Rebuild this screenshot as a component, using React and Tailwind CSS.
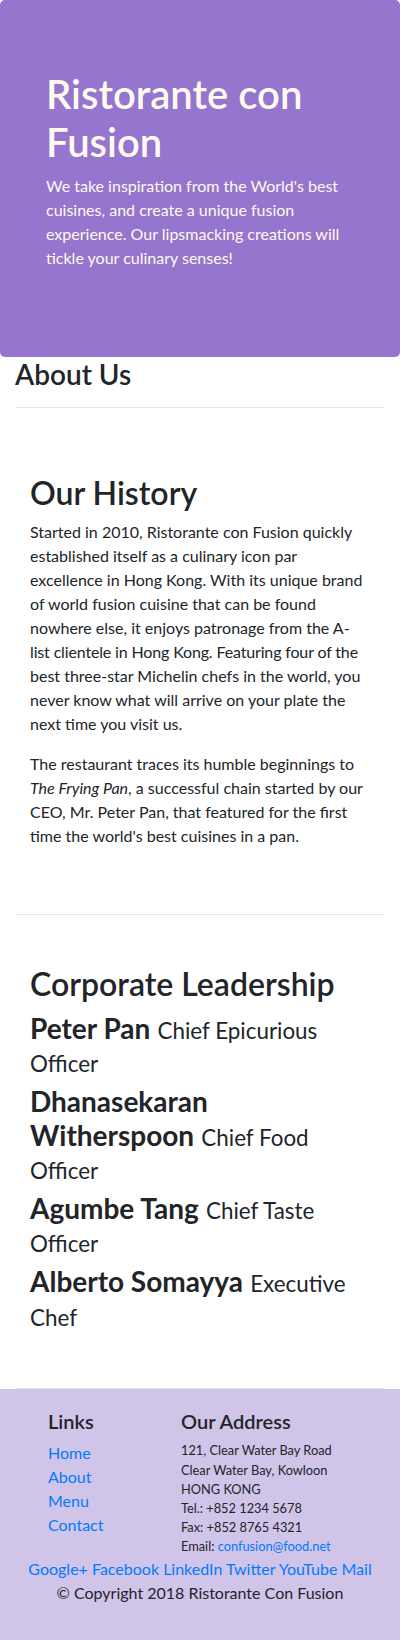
import React from "react";

const leaders = [
  { name: "Peter Pan", title: "Chief Epicurious Officer" },
  { name: "Dhanasekaran Witherspoon", title: "Chief Food Officer" },
  { name: "Agumbe Tang", title: "Chief Taste Officer" },
  { name: "Alberto Somayya", title: "Executive Chef" },
];

const links = ["Home", "About", "Menu", "Contact"];
const socials = ["Google+", "Facebook", "LinkedIn", "Twitter", "YouTube", "Mail"];

export default function App() {
  return (
    <div className="font-['Lato',sans-serif] text-[#212529] bg-white">
      {/* Jumbotron */}
      <header className="bg-[#9575cd] text-[#fffaf0] rounded-[5px] px-[46px] pt-[70px] pb-[71px]">
        <h1 className="text-[40px] leading-[48px] font-semibold mb-2">
          Ristorante con Fusion
        </h1>
        <p className="text-base leading-6 mb-4">
          We take inspiration from the World's best cuisines, and create a unique fusion
          experience. Our lipsmacking creations will tickle your culinary senses!
        </p>
      </header>

      <main className="px-[15px]">
        <h3 className="text-[28px] leading-[34px] font-semibold">About Us</h3>
        <hr className="mt-4 mb-4 border-0 border-t border-black/10" />

        {/* Our History */}
        <section className="px-[15px] pt-[50px] pb-[50px] border-b border-black/10">
          <h2 className="text-[32px] leading-[38.4px] font-semibold mb-2">Our History</h2>
          <p className="text-base leading-6 mb-4">
            Started in 2010, Ristorante con Fusion quickly established itself as a culinary icon
            par excellence in Hong Kong. With its unique brand of world fusion cuisine that can be
            found nowhere else, it enjoys patronage from the A-<br />
            <span className="tracking-[-0.15px]">list clientele in Hong Kong. Featuring four of the</span>{" "}
            best three-star Michelin chefs in the world, you never know what will arrive on your
            plate the next time you visit us.
          </p>
          <p className="text-base leading-6 mb-4">
            The restaurant traces its humble beginnings to <em>The Frying Pan</em>, a successful
            chain started by our CEO, Mr. Peter Pan, that featured for the first time the world's
            best cuisines in a pan.
          </p>
        </section>

        {/* Corporate Leadership */}
        <section className="px-[15px] pt-[50px] pb-[50px] border-b border-black/10">
          <h2 className="text-[32px] leading-[38.4px] font-semibold mb-2">
            Corporate Leadership
          </h2>
          {leaders.map((l) => (
            <h3 key={l.name} className="text-[28px] leading-[33.4px] mb-[6.5px]">
              <span className="font-bold">{l.name}</span>{" "}
              <span className="text-[22.4px] leading-none">{l.title}</span>
            </h3>
          ))}
        </section>
      </main>

      {/* Footer */}
      <footer className="bg-[#d1c4e9] pt-5 pb-5">
        <div className="flex">
          <div className="ml-[33px] w-[133px] px-[15px]">
            <h5 className="text-xl leading-6 font-semibold mb-2">Links</h5>
            <ul className="text-base leading-6 mb-4">
              {links.map((t) => (
                <li key={t}>
                  <a href="#" className="text-[#007bff]">{t}</a>
                </li>
              ))}
            </ul>
          </div>
          <div className="w-[234px] px-[15px]">
            <h5 className="text-xl leading-6 font-semibold mb-2">Our Address</h5>
            <address className="not-italic text-[12.8px] leading-[19.2px]">
              121, Clear Water Bay Road<br />
              Clear Water Bay, Kowloon<br />
              HONG KONG<br />
              Tel.: +852 1234 5678<br />
              Fax: +852 8765 4321<br />
              Email: <a href="mailto:confusion@food.net" className="text-[#007bff]">confusion@food.net</a>
            </address>
          </div>
        </div>
        <div className="text-center text-base leading-6">
          {socials.map((s, i) => (
            <React.Fragment key={s}>
              <a href="#" className="text-[#007bff]">{s}</a>
              {i < socials.length - 1 ? " " : ""}
            </React.Fragment>
          ))}
        </div>
        <p className="text-center text-base leading-6 mb-4">© Copyright 2018 Ristorante Con Fusion</p>
      </footer>
    </div>
  );
}
